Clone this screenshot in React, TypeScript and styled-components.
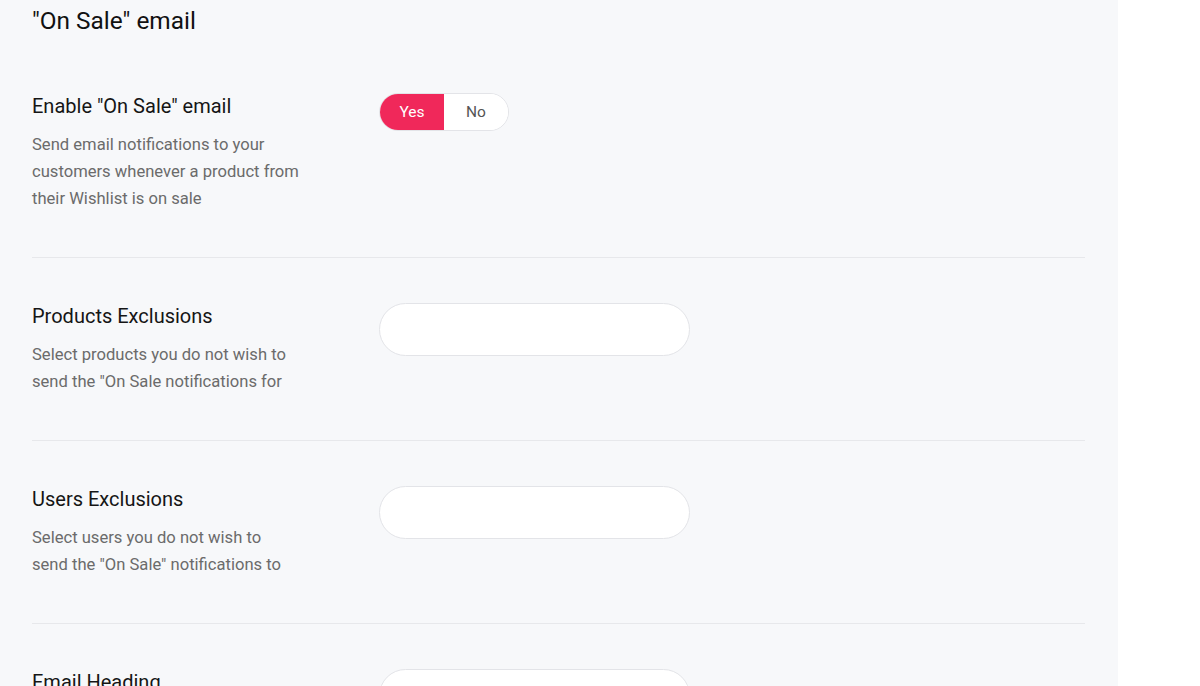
import React from "react";
import styled, { createGlobalStyle } from "styled-components";

const Global = createGlobalStyle`
  html, body { margin: 0; padding: 0; background: #ffffff; }
  body { font-family: Roboto, "Noto Sans", Arial, sans-serif; -webkit-font-smoothing: antialiased; }
  * { box-sizing: border-box; }
`;

const Panel = styled.div`
  width: 1118px;
  height: 686px;
  overflow: hidden;
  background: #f7f8fa;
  padding: 5px 33px 0 32px;
`;

const PageTitle = styled.h1`
  margin: 0 0 11px;
  font-size: 24.4px;
  line-height: 32px;
  font-weight: 400;
  color: #111111;
`;

const Row = styled.div<{ $last?: boolean }>`
  display: grid;
  grid-template-columns: 347px 1fr;
  align-items: start;
  padding: 45px 0 45px;
  border-bottom: ${(p) => (p.$last ? "none" : "1px solid #e7e8eb")};
`;

const Label = styled.div`
  display: flex;
  flex-direction: column;
  gap: 12px;
`;

const LabelTitle = styled.div`
  font-size: 20px;
  line-height: 26px;
  color: #151515;
`;

const Desc = styled.div`
  font-size: 16.6px;
  line-height: 27px;
  color: #6b6b6b;
`;

const Toggle = styled.div`
  display: inline-flex;
  height: 38px;
  border-radius: 19px;
  overflow: hidden;
  border: 1px solid #e3e4e8;
  background: #ffffff;
`;

const ToggleOption = styled.button<{ $active?: boolean }>`
  width: 64px;
  height: 100%;
  border: none;
  margin: 0;
  padding: 0;
  font-family: inherit;
  font-size: 15.5px;
  background: ${(p) => (p.$active ? "#f0285a" : "#ffffff")};
  color: ${(p) => (p.$active ? "#ffffff" : "#555555")};
  cursor: pointer;
`;

const Input = styled.input`
  width: 311px;
  height: 53px;
  border-radius: 27px;
  border: 1px solid #e3e4e8;
  background: #ffffff;
  outline: none;
  padding: 0 20px;
  font-family: inherit;
  font-size: 15px;
`;

type Field = { title: string; desc?: string[]; control: "toggle" | "input" };

const fields: Field[] = [
  {
    title: 'Enable "On Sale" email',
    desc: ["Send email notifications to your", "customers whenever a product from", "their Wishlist is on sale"],
    control: "toggle",
  },
  {
    title: "Products Exclusions",
    desc: ["Select products you do not wish to", 'send the "On Sale notifications for'],
    control: "input",
  },
  {
    title: "Users Exclusions",
    desc: ["Select users you do not wish to", 'send the "On Sale" notifications to'],
    control: "input",
  },
  { title: "Email Heading", control: "input" },
];

export default function App() {
  return (
    <>
      <Global />
      <Panel>
        <PageTitle>"On Sale" email</PageTitle>
        {fields.map((f, i) => (
          <Row key={f.title} $last={i === fields.length - 1}>
            <Label>
              <LabelTitle>{f.title}</LabelTitle>
              {f.desc && (
                <Desc>
                  {f.desc.map((line, j) => (
                    <React.Fragment key={j}>
                      {j > 0 && <br />}
                      {line}
                    </React.Fragment>
                  ))}
                </Desc>
              )}
            </Label>
            <div>
              {f.control === "toggle" ? (
                <Toggle>
                  <ToggleOption $active>Yes</ToggleOption>
                  <ToggleOption>No</ToggleOption>
                </Toggle>
              ) : (
                <Input type="text" />
              )}
            </div>
          </Row>
        ))}
      </Panel>
    </>
  );
}
